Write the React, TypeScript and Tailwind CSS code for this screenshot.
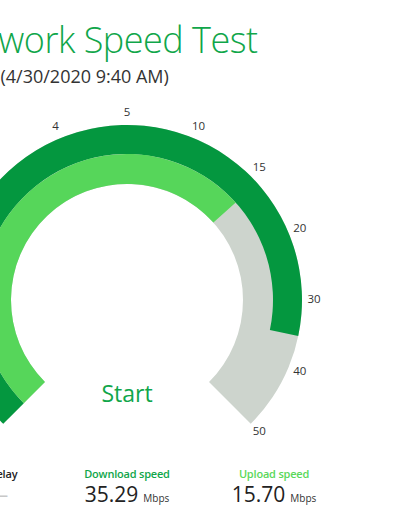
import React from 'react'

const CX = 127
const CY = 300
const R_OUT = 175
const R_MID = 146
const R_IN = 116
const R_LABEL = 187

const TICKS = ['0', '0.5', '1', '2', '3', '4', '5', '10', '15', '20', '30', '40', '50']
const TICK_VALUES = [0, 0.5, 1, 2, 3, 4, 5, 10, 15, 20, 30, 40, 50]
const START_DEG = 225
const STEP_DEG = 22.5

function pt(r: number, deg: number) {
  const a = (deg * Math.PI) / 180
  return [CX + r * Math.cos(a), CY - r * Math.sin(a)]
}

// map a value to a gauge angle, linear between tick marks
function valueToDeg(v: number) {
  for (let i = 0; i < TICK_VALUES.length - 1; i++) {
    const lo = TICK_VALUES[i]
    const hi = TICK_VALUES[i + 1]
    if (v <= hi) {
      const f = (v - lo) / (hi - lo)
      return START_DEG - (i + f) * STEP_DEG
    }
  }
  return START_DEG - (TICK_VALUES.length - 1) * STEP_DEG
}

function band(rIn: number, rOut: number, from: number, to: number) {
  const large = from - to > 180 ? 1 : 0
  const [x1, y1] = pt(rOut, from)
  const [x2, y2] = pt(rOut, to)
  const [x3, y3] = pt(rIn, to)
  const [x4, y4] = pt(rIn, from)
  return `M${x1} ${y1} A${rOut} ${rOut} 0 ${large} 1 ${x2} ${y2} L${x3} ${y3} A${rIn} ${rIn} 0 ${large} 0 ${x4} ${y4} Z`
}

function Gauge({ download, upload }: { download: number; upload: number }) {
  const end = valueToDeg(50)
  return (
    <div className="relative h-[370px]">
      <svg width="400" height="370" viewBox="0 85 400 370" className="block">
        <path d={band(R_IN, R_OUT, START_DEG, end)} fill="#cdd4cd" />
        <path d={band(R_MID, R_OUT, START_DEG, valueToDeg(download))} fill="#04973f" />
        <path d={band(R_IN, R_MID, START_DEG, valueToDeg(upload))} fill="#56d65a" />
        {TICKS.map((t, i) => {
          const [x, y] = pt(R_LABEL, START_DEG - i * STEP_DEG)
          return (
            <text
              key={t}
              x={x}
              y={y}
              textAnchor="middle"
              dominantBaseline="middle"
              fontSize="11.5"
              fill="#333"
              fontFamily="'Open Sans', sans-serif"
            >
              {t}
            </text>
          )
        })}
      </svg>
      <button className="absolute left-[77px] top-[297px] w-[100px] text-center text-[23px] leading-none text-[#10a64a]">
        Start
      </button>
    </div>
  )
}

function Stat({
  label,
  value,
  unit,
  color,
  valueColor = 'text-[#222]',
  className,
}: {
  label: string
  value: string
  unit?: string
  color: string
  valueColor?: string
  className?: string
}) {
  return (
    <div className={`w-[100px] shrink-0 flex flex-col items-center ${className ?? ''}`}>
      <div className={`text-[11px] leading-4 font-semibold tracking-[-0.2px] whitespace-nowrap ${color}`}>{label}</div>
      <div className={`mt-[2px] flex items-baseline gap-[5px] whitespace-nowrap ${valueColor}`}>
        <span className="text-[21px] leading-none">{value}</span>
        {unit && <span className="text-[10px] leading-none text-[#333]">{unit}</span>}
      </div>
    </div>
  )
}

export default function App() {
  return (
    <div className="w-[400px] h-[516px] overflow-hidden bg-white font-['Open_Sans',sans-serif]">
      <h1 className="-ml-[58px] pt-[22px] text-[36px] leading-none font-light tracking-[-0.5px] text-[#10a64a] whitespace-nowrap">
        Network Speed Test
      </h1>
      <p className="-ml-[56px] mt-[9px] text-[18px] leading-none text-[#333] whitespace-nowrap">
        Result (4/30/2020 9:40 AM)
      </p>
      <Gauge download={35.29} upload={15.7} />
      <div className="-ml-[47px] mt-[11px] flex">
        <Stat label="Delay" value="–" color="text-[#222]" valueColor="text-[#c8c8c8]" />
        <Stat label="Download speed" value="35.29" unit="Mbps" color="text-[#10a64a]" className="ml-[24px]" />
        <Stat label="Upload speed" value="15.70" unit="Mbps" color="text-[#5ad85a]" className="ml-[47px]" />
      </div>
    </div>
  )
}
